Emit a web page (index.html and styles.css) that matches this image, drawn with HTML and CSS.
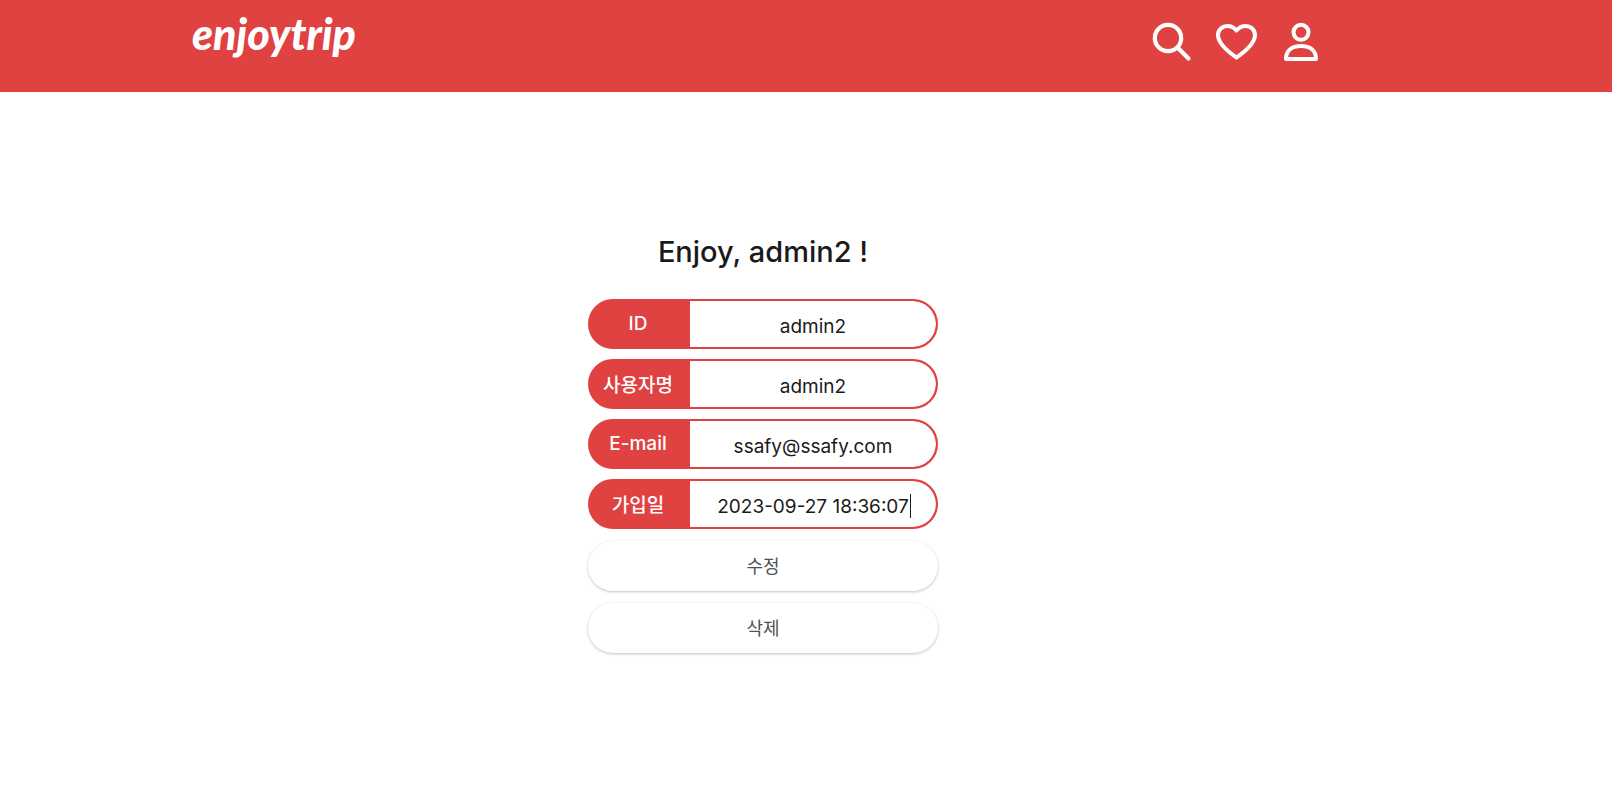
FILE: index.html
```html
<!DOCTYPE html>
<html lang="ko">
<head>
<meta charset="utf-8">
<title>enjoytrip</title>
<link rel="stylesheet" href="styles.css">
</head>
<body>
<header class="header">
  <a class="logo" href="#">enjoytrip</a>
  <nav class="nav">
    <a class="nav-link" href="#" aria-label="검색">
      <svg class="icon" viewBox="0 0 44 44" fill="none" stroke="currentColor" stroke-width="4.2" stroke-linecap="round">
        <circle cx="19" cy="18" r="13.2"/><path d="M29 28L39.5 38.5"/>
      </svg>
    </a>
    <a class="nav-link" href="#" aria-label="찜">
      <svg class="icon" viewBox="0 0 44 44" fill="none" stroke="currentColor" stroke-width="4" stroke-linejoin="round">
        <path d="M22.500 37.500C17.500 34 4 25 4 15C4 9.500 8.500 6 13.300 6C17.500 6 20.500 8 22.500 10.500C24.500 8 27.500 6 31.700 6C36.500 6 41 9.500 41 15C41 25 27.500 34 22.500 37.500Z"/>
      </svg>
    </a>
    <a class="nav-link" href="#" aria-label="마이페이지">
      <svg class="icon" viewBox="0 0 44 44" fill="none" stroke="currentColor" stroke-width="4" stroke-linejoin="round">
        <circle cx="22" cy="12.300" r="7.500"/><path d="M7 39C7 30.500 13 26 22 26S37 30.500 37 39Z"/>
      </svg>
    </a>
  </nav>
</header>
<main class="main">
  <form class="profile">
    <h1 class="title">Enjoy, admin2 !</h1>
    <div class="field">
      <label class="field-label" for="uid">ID</label>
      <input class="field-input" id="uid" type="text" value="admin2">
    </div>
    <div class="field">
      <label class="field-label" for="uname">사용자명</label>
      <input class="field-input" id="uname" type="text" value="admin2">
    </div>
    <div class="field">
      <label class="field-label" for="email">E-mail</label>
      <input class="field-input" id="email" type="text" value="ssafy@ssafy.com">
    </div>
    <div class="field">
      <label class="field-label" for="joined">가입일</label>
      <input class="field-input" id="joined" type="text" value="2023-09-27 18:36:07">
      <span class="caret"></span>
    </div>
    <div class="actions">
      <button class="button" type="button">수정</button>
      <button class="button" type="button">삭제</button>
    </div>
  </form>
</main>
</body>
</html>
```
FILE: styles.css
```css
* {
  box-sizing: border-box;
}

body {
  margin: 0;
  background: #fff;
  color: #1a1a1a;
  font-family: Inter, "Noto Sans CJK KR", sans-serif;
}

.header {
  display: flex;
  justify-content: space-between;
  align-items: flex-start;
  height: 92px;
  padding: 0 289px 0 192px;
  background: #e04141;
}

.logo {
  padding-top: 10px;
  color: #fff;
  font: italic 900 43px/48px Lato, cursive;
  text-decoration: none;
}

.nav {
  display: flex;
  gap: 21px;
  padding-top: 20px;
}

.nav-link {
  color: #fff;
}

.icon {
  display: block;
  width: 44px;
  height: 44px;
}

.main {
  display: flex;
  justify-content: center;
  padding: 140px 274px 40px 188px;
}

.profile {
  display: flex;
  flex-direction: column;
  gap: 10px;
  width: 350px;
}

.title {
  margin: 0 0 17px;
  font-size: 29px;
  font-weight: 500;
  line-height: 40px;
  text-align: center;
}

.field {
  position: relative;
  display: flex;
  height: 50px;
  border: 2px solid #e04141;
  border-radius: 25px;
  background: #e04141;
  overflow: hidden;
}

.field-label {
  display: flex;
  flex: 0 0 100px;
  align-items: center;
  justify-content: center;
  padding: 0 4px 2px 0;
  color: #fff;
  font-size: 19px;
  font-weight: 500;
}

.field-input {
  flex: 1;
  min-width: 0;
  padding: 4px 0 0;
  border: 0;
  border-radius: 0 23px 23px 0;
  outline: 0;
  background: #fff;
  color: #1a1a1a;
  font-family: inherit;
  font-size: 19px;
  text-align: center;
}

.caret {
  position: absolute;
  top: 13px;
  right: 25px;
  width: 1px;
  height: 24px;
  background: #1a1a1a;
}

.actions {
  display: flex;
  flex-direction: column;
  gap: 12px;
  margin-top: 2px;
}

.button {
  height: 50px;
  padding: 0 0 2px;
  border: 0;
  border-radius: 25px;
  background: #fff;
  box-shadow: 0 1px 3px rgba(0, 0, 0, 0.24);
  color: #505050;
  font-family: inherit;
  font-size: 18px;
}
```
